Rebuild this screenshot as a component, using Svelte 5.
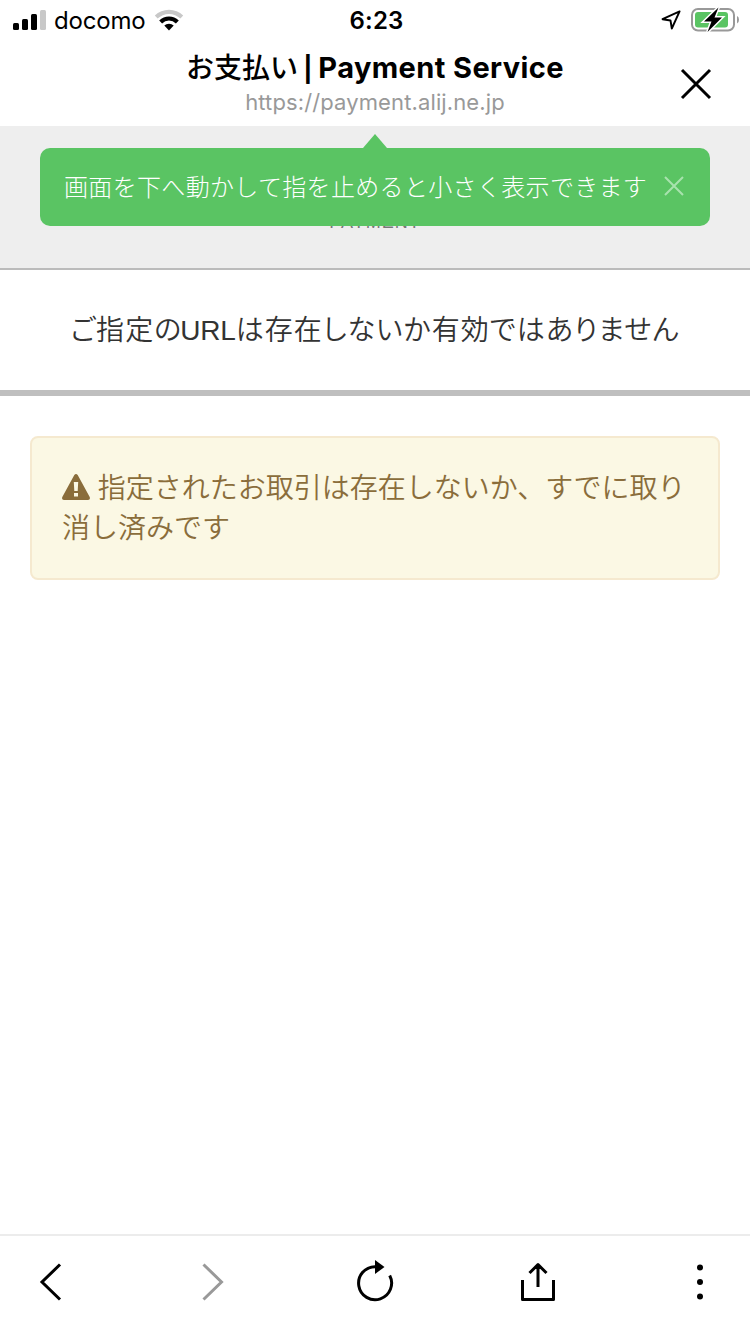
<script lang="ts">
	// ── Page info ──
	const carrier = 'docomo';
	const time = '6:23';
	const url = 'https://payment.alij.ne.jp';

	let showTip = $state(true);
</script>

<div class="screen">
	<div class="status-bar">
		<div class="status-left">
			<svg width="34" height="22" viewBox="0 0 34 22">
				<rect x="0" y="14" width="6" height="7" rx="1.5" />
				<rect x="9" y="10" width="6" height="11" rx="1.5" />
				<rect x="18" y="5" width="6" height="16" rx="1.5" />
				<rect x="27" y="1" width="6" height="20" rx="1.5" fill="#c8c8c8" />
			</svg>
			<span class="carrier">{carrier}</span>
			<svg class="wifi" width="30" height="22" viewBox="0 0 30 22">
				<path d="M0.8 6.6a20.3 20.3 0 0 1 28.4 0l-2.8 3a16.2 16.2 0 0 0-22.8 0z" fill="#c8c8c8" />
				<path d="M5.2 11.5a13.8 13.8 0 0 1 19.6 0l-2.9 3a9.6 9.6 0 0 0-13.8 0z" />
				<path d="M10.3 16.6a6.6 6.6 0 0 1 9.4 0L15 21.6z" />
			</svg>
		</div>
		<span class="time">{time}</span>
		<div class="status-right">
			<svg width="20" height="20" viewBox="0 0 20 20">
				<path d="M18.6 1.4 1.5 9.2l8 1.3 1.3 8z" fill="none" stroke="#000" stroke-width="1.9" stroke-linejoin="round" />
			</svg>
			<svg width="50" height="26" viewBox="0 0 50 26">
				<rect x="2" y="2" width="42" height="21.5" rx="6" fill="none" stroke="#999" stroke-width="2" />
				<rect x="5" y="5" width="33" height="15.5" rx="3" fill="#5ac463" />
				<path d="M47 9v7.5q2-.8 2-3.8t-2-3.7z" fill="#999" />
				<path d="M28.5.5 14 14.5h7.5l-4 10.5L32 10.5h-7.5z" stroke="#fff" stroke-width="3" paint-order="stroke" />
			</svg>
		</div>
	</div>

	<header>
		<h1><span class="ja">お支払い</span> <span class="bar">|</span> Payment Service</h1>
		<p class="url">{url}</p>
		<button class="close" aria-label="閉じる">
			<svg width="32" height="32" viewBox="0 0 32 32">
				<path d="M2 2l28 28M30 2 2 30" fill="none" stroke="#000" stroke-width="3" />
			</svg>
		</button>
	</header>

	<main>
		<div class="brand">
			<span>PAYMENT</span>
			{#if showTip}
				<div class="tip">
					<span>画面を下へ動かして指を止めると小さく表示できます</span>
					<button aria-label="閉じる" onclick={() => (showTip = false)}>
						<svg width="20" height="20" viewBox="0 0 20 20">
							<path d="M1 1l18 18M19 1 1 19" fill="none" stroke="#a8e2ae" stroke-width="2" />
						</svg>
					</button>
				</div>
			{/if}
		</div>
		<h2>ご指定の<span>URL</span>は存在しないか有効ではありません</h2>
		<div class="alert">
			<svg width="28" height="26" viewBox="0 0 28 26">
				<path
					d="M12.3 1q1.7-2 3.4 0l12 22q1 2.8-1.7 3H2q-2.7-.2-1.7-3zM11.8 8l.5 9h3.4l.5-9zM12 19v3.6h4V19z"
					fill="#8a6d3b"
					fill-rule="evenodd"
				/>
			</svg>
			指定されたお取引は存在しないか、すでに取り消し済みです
		</div>
	</main>

	<nav>
		<button aria-label="戻る">
			<svg width="40" height="44" viewBox="0 0 40 44">
				<path d="M30 4.5 12 22l18 17.5" fill="none" stroke="#000" stroke-width="3" />
			</svg>
		</button>
		<button aria-label="進む" disabled>
			<svg width="40" height="44" viewBox="0 0 40 44">
				<path d="M10.5 4.5 28.5 22l-18 17.5" fill="none" stroke="#999" stroke-width="3" />
			</svg>
		</button>
		<button aria-label="再読み込み">
			<svg width="40" height="44" viewBox="0 0 40 44">
				<path d="M20 6.7A16.5 16.5 0 1 0 34.7 15.5" fill="none" stroke="#000" stroke-width="3" />
				<path d="M20 0v14l9.5-7z" />
			</svg>
		</button>
		<button aria-label="共有">
			<svg width="40" height="44" viewBox="0 0 40 44">
				<path d="M4.5 20v19.5h31V20M20 27V5M11.5 13 20 4.5 28.5 13" fill="none" stroke="#000" stroke-width="3" stroke-linejoin="round" />
			</svg>
		</button>
		<button aria-label="メニュー">
			<svg width="40" height="44" viewBox="0 0 40 44">
				<circle cx="20" cy="7.5" r="3" />
				<circle cx="20" cy="22" r="3" />
				<circle cx="20" cy="36.5" r="3" />
			</svg>
		</button>
	</nav>
</div>

<style>
	:global(body) {
		margin: 0;
		background: #fff;
	}

	.screen {
		display: flex;
		flex-direction: column;
		width: 750px;
		height: 1334px;
		background: #fff;
		color: #000;
		font-family: Inter, 'Noto Sans CJK JP', sans-serif;
	}
	button {
		display: flex;
		padding: 0;
		border: 0;
		background: none;
	}
	svg {
		display: block;
		flex: none;
	}

	/* ── Status bar ── */
	.status-bar {
		display: grid;
		grid-template-columns: 1fr auto 1fr;
		align-items: center;
		height: 40px;
		padding: 0 10px 0 13px;
		box-sizing: border-box;
	}
	.status-left,
	.status-right {
		display: flex;
		align-items: center;
	}
	.status-right {
		justify-content: flex-end;
		gap: 9px;
	}
	.carrier {
		margin-left: 7px;
		font-size: 24px;
		letter-spacing: -0.2px;
	}
	.wifi {
		margin-left: 9px;
	}
	.time {
		font-size: 24px;
		font-weight: 600;
		letter-spacing: 0.2px;
	}

	/* ── Title bar ── */
	header {
		position: relative;
		height: 86px;
		text-align: center;
	}
	h1 {
		margin: 0;
		padding-top: 8px;
		font-size: 29px;
		font-weight: 700;
		line-height: 40px;
		letter-spacing: 0.4px;
	}
	h1 .ja {
		font-size: 28px;
		font-weight: 500;
		letter-spacing: 0;
	}
	h1 .bar {
		margin: 0 -2px;
		font-size: 25px;
	}
	.url {
		margin: 0;
		color: #999;
		font-size: 22px;
		line-height: 26px;
		letter-spacing: 0.12px;
	}
	.close {
		position: absolute;
		top: 28px;
		right: 38px;
	}

	/* ── Page ── */
	main {
		flex: 1;
		font-family: 'Liberation Sans', 'Noto Sans CJK JP', sans-serif;
		font-weight: 350;
	}
	.brand {
		position: relative;
		height: 144px;
		padding-top: 86px;
		box-sizing: border-box;
		background: #eee;
		border-bottom: 2px solid #bbb;
		text-align: center;
		color: #777;
		font-size: 18px;
		line-height: 20px;
		letter-spacing: 1px;
	}
	.tip {
		position: absolute;
		top: 22px;
		left: 40px;
		right: 40px;
		display: flex;
		align-items: center;
		gap: 17px;
		height: 78px;
		padding: 0 0 2px 24px;
		border-radius: 10px;
		box-sizing: border-box;
		background: #5ac463;
		color: #fff;
		font-family: 'Noto Sans CJK JP', sans-serif;
		font-size: 24px;
		font-weight: 300;
		letter-spacing: 0.33px;
		white-space: nowrap;
	}
	.tip::before {
		content: '';
		position: absolute;
		top: -14px;
		left: 50%;
		margin-left: -12px;
		border: 12px solid transparent;
		border-top: 0;
		border-bottom: 14px solid #5ac463;
	}
	h2 {
		margin: 0;
		height: 120px;
		border-bottom: 6px solid #bfbfbf;
		color: #333;
		font-size: 28px;
		font-weight: 350;
		line-height: 122px;
		text-align: center;
		font-feature-settings: 'palt';
		letter-spacing: 1.05px;
	}
	h2 span {
		margin-left: -2px;
		letter-spacing: -0.2px;
	}
	.alert {
		height: 144px;
		margin: 40px 30px 0;
		padding: 31px 30px;
		box-sizing: border-box;
		background: #fbf8e4;
		border: 2px solid #f5e9cf;
		border-radius: 8px;
		color: #8a6d3b;
		font-size: 28px;
		line-height: 40px;
	}
	.alert svg {
		display: inline-block;
		vertical-align: -2px;
	}

	/* ── Toolbar ── */
	nav {
		display: flex;
		justify-content: space-between;
		height: 100px;
		padding: 24px 30px 0;
		box-sizing: border-box;
		border-top: 2px solid #ececec;
	}
</style>
